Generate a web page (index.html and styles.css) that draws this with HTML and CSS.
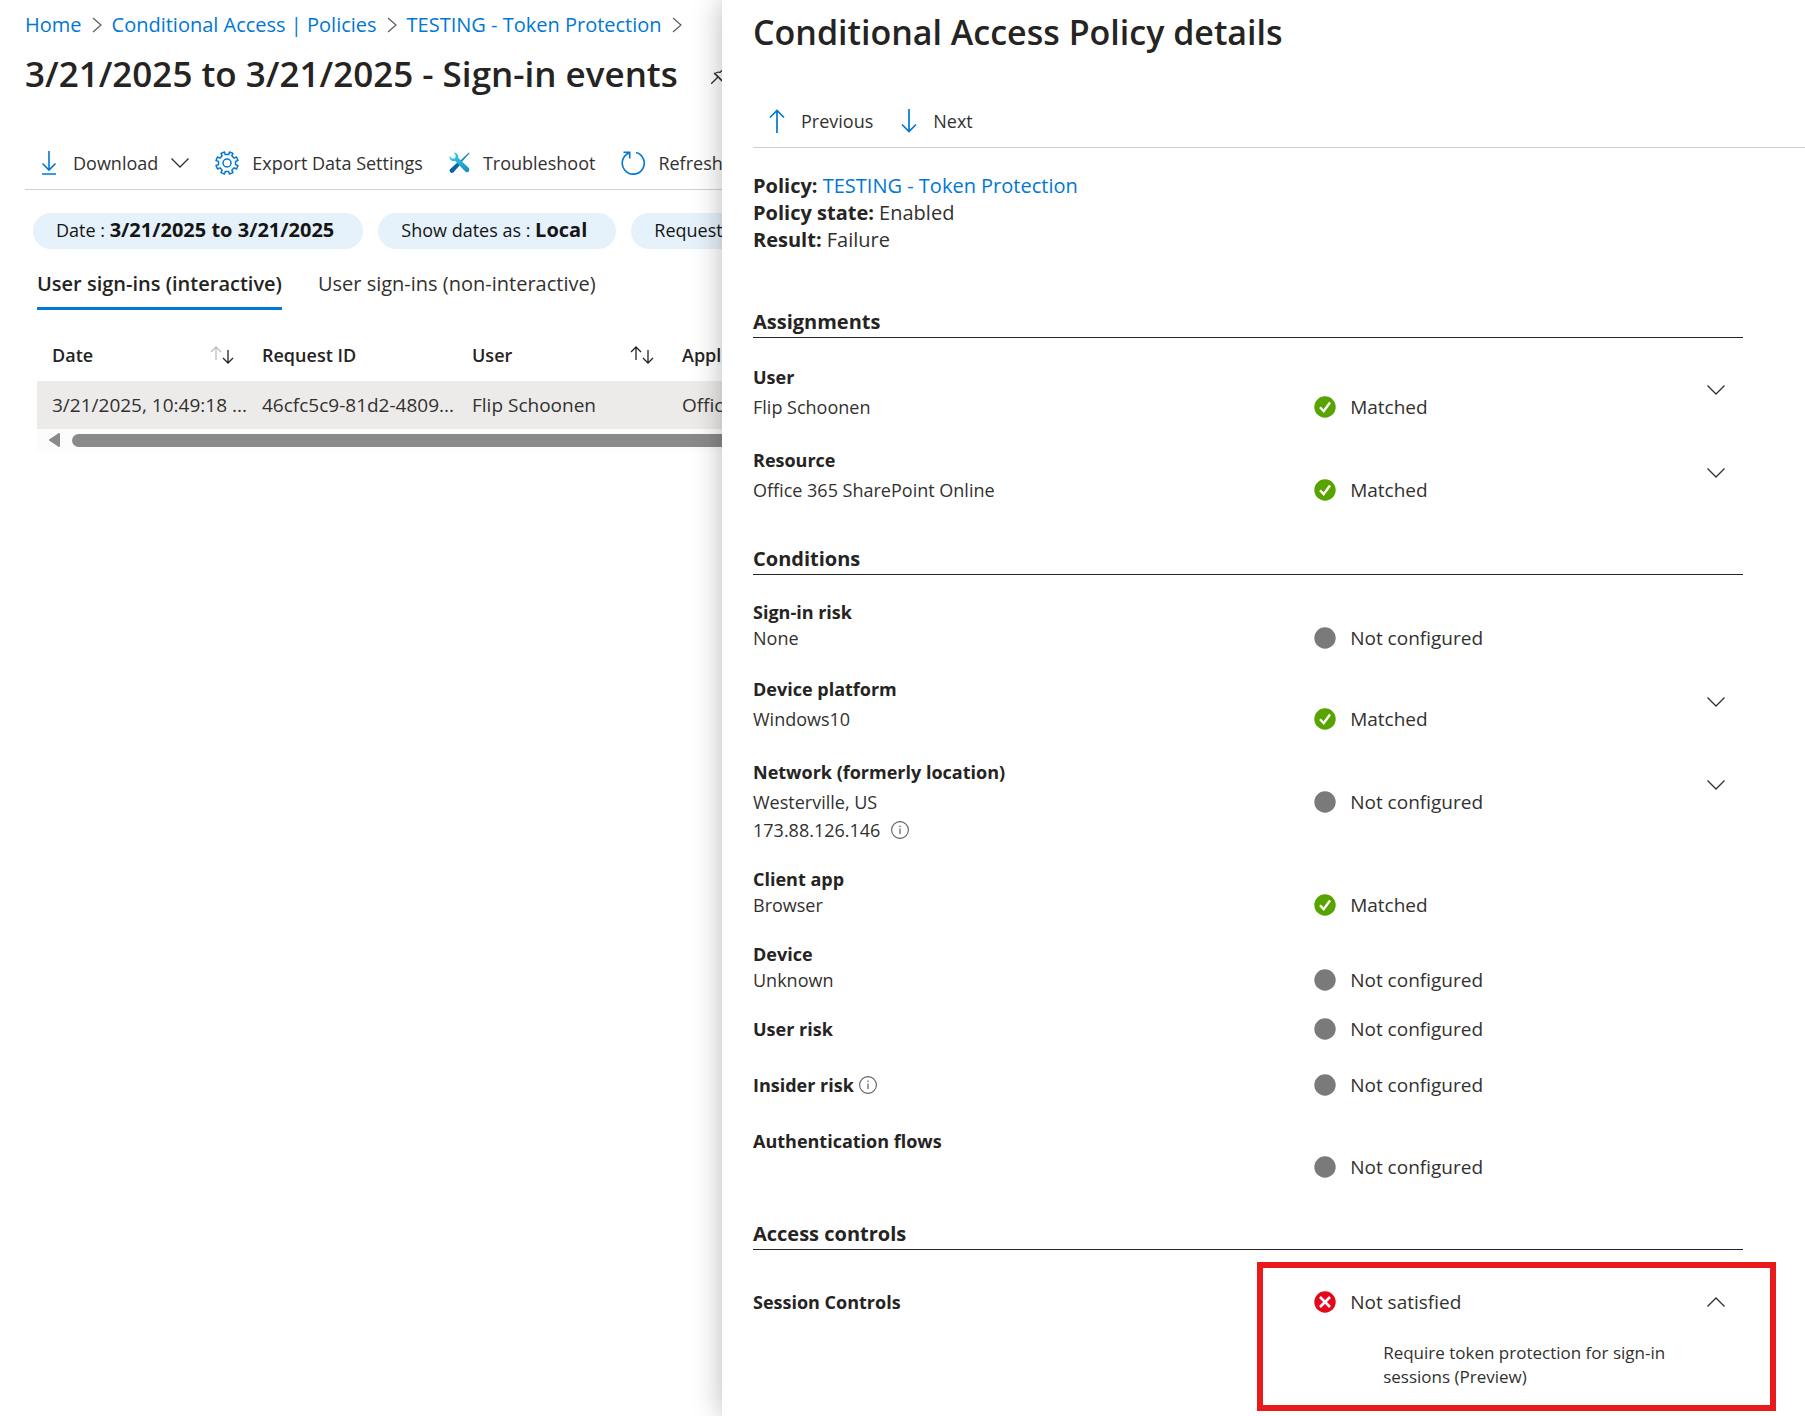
FILE: index.html
```html
<!DOCTYPE html>
<html lang="en">
<head>
    <meta charset="UTF-8">
    <meta name="viewport" content="width=device-width, initial-scale=1.0">
    <title>Sign-in events</title>
    <link rel="stylesheet" href="styles.css">
</head>
<body>
    <!-- Shared icons -->
    <svg class="sprite" aria-hidden="true">
        <symbol id="crumb" viewBox="0 0 10 16"><path d="M1 1l8 7-8 7" fill="none" stroke="#605e5c" stroke-width="1.2"/></symbol>
        <symbol id="down" viewBox="0 0 18 10"><path d="M.5 .5L9 9l8.500-8.500" fill="none" stroke="currentColor" stroke-width="1.300"/></symbol>
        <symbol id="up" viewBox="0 0 18 10"><path d="M.5 9.500L9 1l8.500 8.500" fill="none" stroke="currentColor" stroke-width="1.300"/></symbol>
        <symbol id="ok" viewBox="0 0 22 22"><circle cx="11" cy="11" r="10.700" fill="#57a300"/><path d="M6 11.200l3.700 4L16 6.500" fill="none" stroke="#fff" stroke-width="2.400"/></symbol>
        <symbol id="none" viewBox="0 0 22 22"><circle cx="11" cy="11" r="10.700" fill="#7a7a7a"/></symbol>
        <symbol id="fail" viewBox="0 0 22 22"><circle cx="11" cy="11" r="10.700" fill="#e3081b"/><path d="M6 6l10 10M16 6L6 16" stroke="#fff" stroke-width="2.600"/></symbol>
        <symbol id="info" viewBox="0 0 18 18"><circle cx="9" cy="9" r="8.400" fill="none" stroke="#605e5c" stroke-width="1.100"/><path d="M9 7.500V13M9 4.600v1.400" stroke="#605e5c" stroke-width="1.200"/></symbol>
        <symbol id="arrow-up" viewBox="0 0 16 24"><path d="M8 24V1.500M1 8.500l7-7 7 7" fill="none" stroke="#0078d4" stroke-width="1.700"/></symbol>
        <symbol id="arrow-down" viewBox="0 0 16 24"><path d="M8 0v22.500M1 15.500l7 7 7-7" fill="none" stroke="#0078d4" stroke-width="1.700"/></symbol>
    </svg>

    <main class="page">
        <nav class="breadcrumb" aria-label="Breadcrumb">
            <a href="#">Home</a>
            <svg class="crumb"><use href="#crumb"/></svg>
            <a href="#">Conditional Access | Policies</a>
            <svg class="crumb"><use href="#crumb"/></svg>
            <a href="#">TESTING - Token Protection</a>
            <svg class="crumb"><use href="#crumb"/></svg>
        </nav>

        <header class="title-row">
            <h1>3/21/2025 to 3/21/2025 - Sign-in events</h1>
            <button class="pin" aria-label="Pin">
                <svg width="20" height="20" viewBox="0 0 20 20" fill="none" stroke="#323130" stroke-width="1.300"><path d="M0 20l7-7M3 9l8 8M4 9.500c2-1.500 4-1.500 5-1l4-4 .5-3 6 6-3 .5-4 4c.5 1 .5 3-1 5z"/></svg>
            </button>
        </header>

        <div class="toolbar">
            <button class="tool">
                <svg class="icon-arrow" viewBox="0 0 16 24"><path d="M8 0v19M1.500 12.500L8 19l6.500-6.500M1 23h14" fill="none" stroke="#0078d4" stroke-width="1.600"/></svg>
                Download
                <svg class="chevron"><use href="#down"/></svg>
            </button>
            <button class="tool">
                <svg class="icon" viewBox="0 0 24 24" fill="none" stroke="#0078d4" stroke-width="1.500" stroke-linejoin="round"><circle cx="12" cy="12" r="4"/><path d="M10.200 3.500L9.500 1 6 2.400l1.200 2.400-2.300 2.300L2.500 6 1 9.500l2.500.9v3.200L1 14.500 2.500 18l2.400-1.200 2.300 2.400L6 21.600 9.500 23l.8-2.500h3.300l.9 2.500 3.500-1.400-1.200-2.400 2.300-2.400L21.500 18l1.500-3.500-2.500-.9v-3.200l2.500-.9L21.500 6l-2.400 1.100-2.300-2.300L18 2.400 14.500 1l-.8 2.500z"/></svg>
                Export Data Settings
            </button>
            <button class="tool">
                <svg class="icon-tools" viewBox="0 0 22 22">
                    <defs><linearGradient id="g" x1="0" y1="0" x2="1" y2="1"><stop offset="0" stop-color="#32d4f5"/><stop offset="1" stop-color="#198ab3"/></linearGradient></defs>
                    <path d="M20.800 0.500l.8.8-9 10-1.500-1.500z" fill="#1a86b5"/>
                    <path d="M10 10l2.500 2.500-8 9c-2 1.500-5-1-3.500-3.500z" fill="#0a63a8"/>
                    <path d="M5 .5c3 0 5.500 2.500 4.500 5.500l3.500 3.500 7.500 7c2.500 2.500-1 6.500-3.500 4l-7-7.500L6.500 9.500C3 10.500 0 8 .5 4.500L3.500 7 6.500 6.500 7 3.500z" fill="url(#g)"/>
                </svg>
                Troubleshoot
            </button>
            <button class="tool">
                <svg class="icon" viewBox="0 0 24 24" fill="none" stroke="#0078d4" stroke-width="1.600"><path d="M15 1.500A11 11 0 1 1 8 2M2.500 1.200h6.200v6.200"/></svg>
                Refresh
            </button>
        </div>

        <div class="filters">
            <button class="pill">Date : <b>3/21/2025 to 3/21/2025</b></button>
            <button class="pill">Show dates as : <b>Local</b></button>
            <button class="pill">Request</button>
        </div>

        <div class="tabs" role="tablist">
            <button class="tab active" role="tab" aria-selected="true">User sign-ins (interactive)</button>
            <button class="tab" role="tab" aria-selected="false">User sign-ins (non-interactive)</button>
        </div>

        <div class="grid">
            <table>
                <thead>
                    <tr>
                        <th><div class="head">Date <svg class="sort" viewBox="0 0 24 18" fill="none" stroke-width="1.300"><path d="M6 14V1M1 6l5-5 5 5" stroke="#c0bebc"/><path d="M18 4v13M13 12l5 5 5-5" stroke="#252423"/></svg></div></th>
                        <th>Request ID</th>
                        <th><div class="head">User <svg class="sort" viewBox="0 0 24 18" fill="none" stroke="#252423" stroke-width="1.300"><path d="M6 14V1M1 6l5-5 5 5M18 4v13M13 12l5 5 5-5"/></svg></div></th>
                        <th class="last">Appl</th>
                    </tr>
                </thead>
                <tbody>
                    <tr>
                        <td>3/21/2025, 10:49:18 ...</td>
                        <td>46cfc5c9-81d2-4809...</td>
                        <td>Flip Schoonen</td>
                        <td>Offic</td>
                    </tr>
                </tbody>
            </table>
            <div class="scrollbar">
                <svg width="11" height="14" viewBox="0 0 11 14"><path d="M10 1v12L1 7z" fill="#8a8a8a" stroke="#8a8a8a" stroke-width="2" stroke-linejoin="round"/></svg>
                <div class="thumb"></div>
            </div>
        </div>
    </main>

    <aside class="panel">
        <h2 class="panel-title">Conditional Access Policy details</h2>
        <div class="panel-nav">
            <button class="tool"><svg class="icon-arrow"><use href="#arrow-up"/></svg>Previous</button>
            <button class="tool"><svg class="icon-arrow"><use href="#arrow-down"/></svg>Next</button>
        </div>

        <div class="panel-body">
            <div class="summary">
                <div><b>Policy:</b> <a href="#">TESTING - Token Protection</a></div>
                <div><b>Policy state:</b> Enabled</div>
                <div><b>Result:</b> Failure</div>
            </div>

            <h3>Assignments</h3>
            <div class="rows">
                <div class="row expandable">
                    <div class="name">User</div>
                    <div class="value">Flip Schoonen</div>
                    <div class="status"><svg><use href="#ok"/></svg>Matched</div>
                    <button class="toggle" aria-label="Expand User"><svg class="chevron"><use href="#down"/></svg></button>
                </div>
                <div class="row expandable">
                    <div class="name">Resource</div>
                    <div class="value">Office 365 SharePoint Online</div>
                    <div class="status"><svg><use href="#ok"/></svg>Matched</div>
                    <button class="toggle" aria-label="Expand Resource"><svg class="chevron"><use href="#down"/></svg></button>
                </div>
            </div>

            <h3>Conditions</h3>
            <div class="rows">
                <div class="row">
                    <div class="name">Sign-in risk</div>
                    <div class="value">None</div>
                    <div class="status"><svg><use href="#none"/></svg>Not configured</div>
                </div>
                <div class="row expandable">
                    <div class="name">Device platform</div>
                    <div class="value">Windows10</div>
                    <div class="status"><svg><use href="#ok"/></svg>Matched</div>
                    <button class="toggle" aria-label="Expand Device platform"><svg class="chevron"><use href="#down"/></svg></button>
                </div>
                <div class="row expandable">
                    <div class="name">Network (formerly location)</div>
                    <div class="value">Westerville, US</div>
                    <div class="status"><svg><use href="#none"/></svg>Not configured</div>
                    <div class="extra">173.88.126.146 <svg class="info"><use href="#info"/></svg></div>
                    <button class="toggle" aria-label="Expand Network"><svg class="chevron"><use href="#down"/></svg></button>
                </div>
                <div class="row">
                    <div class="name">Client app</div>
                    <div class="value">Browser</div>
                    <div class="status"><svg><use href="#ok"/></svg>Matched</div>
                </div>
                <div class="row">
                    <div class="name">Device</div>
                    <div class="value">Unknown</div>
                    <div class="status"><svg><use href="#none"/></svg>Not configured</div>
                </div>
                <div class="row single">
                    <div class="name">User risk</div>
                    <div class="status"><svg><use href="#none"/></svg>Not configured</div>
                </div>
                <div class="row single">
                    <div class="name">Insider risk <svg class="info"><use href="#info"/></svg></div>
                    <div class="status"><svg><use href="#none"/></svg>Not configured</div>
                </div>
                <div class="row">
                    <div class="name">Authentication flows</div>
                    <div class="status"><svg><use href="#none"/></svg>Not configured</div>
                </div>
            </div>

            <h3>Access controls</h3>
            <div class="session">
                <div class="name">Session Controls</div>
                <div class="outcome">
                    <div class="outcome-head">
                        <div class="status"><svg><use href="#fail"/></svg>Not satisfied</div>
                        <button class="toggle" aria-label="Collapse Session Controls"><svg class="chevron"><use href="#up"/></svg></button>
                    </div>
                    <p class="reason">Require token protection for sign-in sessions (Preview)</p>
                </div>
            </div>
        </div>
    </aside>
</body>
</html>
```
FILE: styles.css
```css
* {
    box-sizing: border-box;
}
body {
    margin: 0;
    min-height: 100vh;
    position: relative;
    overflow-x: hidden;
    background: #fff;
    color: #323130;
    font-family: "Open Sans", "Noto Sans", sans-serif;
    font-size: 19px;
    line-height: 26px;
}
a {
    color: #0078d4;
    text-decoration: none;
}
button {
    padding: 0;
    border: none;
    background: none;
    color: inherit;
    font: inherit;
    cursor: pointer;
    white-space: nowrap;
}
svg {
    display: block;
    flex: none;
}
h1, h2, h3, p {
    margin: 0;
}
.sprite {
    position: absolute;
    width: 0;
    height: 0;
}

/* Sign-in events page */
.page {
    width: 41%;
    padding: 12px 0 0 25px;
    overflow: hidden;
    white-space: nowrap;
}
.breadcrumb {
    display: flex;
    align-items: center;
    gap: 10px;
    font-size: 20px;
}
.crumb {
    width: 10px;
    height: 16px;
}
.title-row {
    display: flex;
    align-items: center;
    gap: 33px;
    margin-top: 12px;
}
h1, .panel-title {
    color: #252423;
    font-size: 35px;
    font-weight: 600;
    line-height: 48px;
}
.panel-title {
    font-size: 34px;
}
.toolbar {
    display: flex;
    align-items: center;
    gap: 26px;
    height: 54px;
    margin-top: 38px;
    padding-left: 16px;
    border-bottom: 1px solid #d2d0ce;
}
.tool {
    display: flex;
    align-items: center;
    gap: 13px;
    font-size: 18px;
}
.icon {
    width: 24px;
    height: 24px;
}
.icon-tools {
    width: 21px;
    height: 21px;
}
.icon-arrow {
    width: 16px;
    height: 24px;
    margin-right: 3px;
}
.chevron {
    width: 18px;
    height: 10px;
}
.filters {
    display: flex;
    gap: 15px;
    margin: 23px 0 0 8px;
}
.pill {
    height: 36px;
    padding: 0 29px 2px 23px;
    border-radius: 18px;
    background: #e5f1fb;
    color: #161514;
    font-size: 18px;
}
.pill b {
    font-size: 20px;
    font-weight: 700;
}
.tabs {
    display: flex;
    gap: 36px;
    margin: 20px 0 0 12px;
}
.tab {
    height: 41px;
    padding-bottom: 8px;
    border-bottom: 3px solid transparent;
    font-size: 20px;
}
.tab.active {
    border-color: #0078d4;
    color: #252423;
    font-weight: 600;
}
.grid {
    margin: 20px 0 0 12px;
}
table {
    width: 100%;
    table-layout: fixed;
    border-collapse: collapse;
}
th, td {
    width: 210px;
    height: 48px;
    padding: 0 15px;
    text-align: left;
}
th {
    height: 51px;
    padding-right: 13px;
    padding-bottom: 2px;
    color: #252423;
    font-size: 18px;
    font-weight: 600;
}
td {
    padding-right: 0;
    background: #edebe9;
}
.last {
    width: auto;
    padding-right: 0;
}
.head {
    display: flex;
    align-items: center;
    justify-content: space-between;
}
.sort {
    width: 24px;
    height: 18px;
}
.scrollbar {
    display: flex;
    align-items: center;
    gap: 12px;
    height: 22px;
    padding-left: 12px;
    background: #fcfcfc;
}
.thumb {
    flex: 1;
    height: 13px;
    border-radius: 7px 0 0 7px;
    background: #8a8a8a;
}

/* Details panel, lies over the page */
.panel {
    position: absolute;
    top: 0;
    right: 0;
    width: 60%;
    min-height: 100%;
    padding: 8px 0 0 31px;
    background: #fff;
    box-shadow: 0 0 28px rgba(0, 0, 0, 0.28);
}
.panel-nav {
    display: flex;
    align-items: center;
    gap: 28px;
    height: 54px;
    margin-top: 38px;
    padding-left: 16px;
    border-bottom: 1px solid #d2d0ce;
}
.panel-body {
    padding: 24px 62px 16px 0;
}
.summary {
    font-size: 20px;
    line-height: 27px;
}
.summary b, h3, .name {
    color: #252423;
    font-weight: 700;
}
h3 {
    margin-top: 56px;
    padding-bottom: 2px;
    border-bottom: 1px solid #252423;
    font-size: 20px;
    line-height: 26px;
}
.rows {
    display: flex;
    flex-direction: column;
    gap: 23px;
    padding-top: 24px;
}
.rows + h3 {
    margin-top: 41px;
}
.row, .session {
    display: grid;
    grid-template-columns: 10fr 7fr 36px;
}
.row {
    grid-template-rows: 26px 26px;
}
.row.expandable {
    grid-template-rows: 30px 30px;
    align-items: center;
}
.row.single {
    grid-template-rows: 33px;
}
.name, .value, .extra {
    display: flex;
    align-items: center;
    grid-column: 1;
    font-size: 18px;
}
.single .name {
    height: 26px;
    gap: 5px;
}
.extra {
    gap: 11px;
}
.status {
    display: flex;
    align-items: center;
    gap: 14px;
    grid-column: 2;
    grid-row: 2;
}
.status svg {
    width: 22px;
    height: 22px;
}
.single .status {
    grid-row: 1;
    height: 26px;
}
.info {
    width: 18px;
    height: 18px;
}
.row .toggle {
    grid-column: 3;
    grid-row: 1 / 3;
    justify-self: start;
    height: 60px;
    padding-bottom: 4px;
}
.session {
    align-items: start;
    padding-top: 39px;
}
.outcome {
    position: relative;
    grid-column: 2 / 4;
}
/* Red call-out frame round the failed control */
.outcome::after {
    content: "";
    position: absolute;
    inset: -27px -33px -22px -57px;
    border: 6px solid #e81a1c;
    pointer-events: none;
}
.outcome-head {
    display: grid;
    grid-template-columns: 1fr 36px;
    align-items: center;
}
.outcome-head .status {
    grid-column: 1;
    grid-row: 1;
}
.outcome-head .toggle {
    justify-self: start;
}
.reason {
    max-width: 370px;
    margin-top: 26px;
    padding-left: 69px;
    font-size: 17px;
    line-height: 24px;
}
```
